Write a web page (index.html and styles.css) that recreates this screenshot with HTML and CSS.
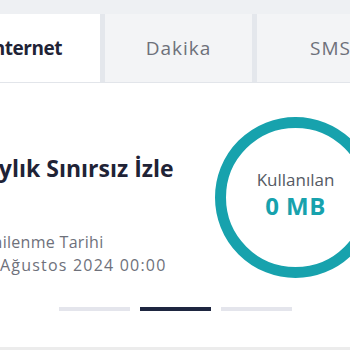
FILE: index.html
```html
<!DOCTYPE html>
<html lang="tr">
<head>
<meta charset="utf-8">
<link rel="stylesheet" href="styles.css">
</head>
<body>
<div class="page">
  <div class="tabbar">
    <div class="tabs">
      <div class="tab active">Internet</div>
      <div class="tab">Dakika</div>
      <div class="tab">SMS</div>
    </div>
  </div>
  <div class="slide">
    <div class="info">
      <div class="title">Aylık Sınırsız İzle</div>
      <div class="meta">
        <div class="meta-label">Yenilenme Tarihi</div>
        <div class="meta-value">15 Ağustos 2024 00:00</div>
      </div>
    </div>
    <div class="ring">
      <div class="ring-label">Kullanılan</div>
      <div class="ring-value">0 MB</div>
    </div>
  </div>
  <div class="dots">
    <span class="dot"></span>
    <span class="dot current"></span>
    <span class="dot"></span>
  </div>
  <div class="footer-strip"></div>
</div>
</body>
</html>
```
FILE: styles.css
```css
html, body {
  margin: 0;
  padding: 0;
  background: #ffffff;
  overflow: hidden;
}
.page {
  width: 350px;
  height: 350px;
  overflow: hidden;
  font-family: "Open Sans", "Noto Sans", sans-serif;
}
.tabbar {
  background: #eef0f3;
  padding-top: 14px;
}
.tabs {
  display: flex;
  margin-left: -47px;
  border-bottom: 1px solid #e2e5ea;
}
.tab {
  flex: none;
  width: 147px;
  height: 68px;
  display: flex;
  align-items: center;
  justify-content: center;
  background: #f3f4f6;
  color: #6d707a;
  font-size: 19px;
  letter-spacing: 1px;
  border-right: 5px solid #e4e7ec;
}
.tab.active {
  width: 143px;
  padding-right: 4px;
  background: #ffffff;
  color: #1f2336;
  font-weight: 700;
  letter-spacing: -0.5px;
}
.slide {
  display: flex;
  align-items: flex-start;
  justify-content: space-between;
  padding-top: 34px;
  margin-left: -26px;
  margin-right: -26px;
}
.info {
  padding-top: 37px;
}
.title {
  padding-left: 9px;
  font-size: 23px;
  line-height: 28px;
  font-weight: 700;
  color: #1f2336;
  white-space: nowrap;
}
.meta {
  margin-top: 49px;
  color: #6e717b;
  font-size: 16px;
  line-height: 23px;
  white-space: nowrap;
}
.meta-label {
  letter-spacing: 0.3px;
}
.meta-value {
  letter-spacing: 1.2px;
}
.ring {
  flex: none;
  box-sizing: border-box;
  width: 161px;
  height: 161px;
  padding-bottom: 6px;
  border: 11px solid #17a2ad;
  border-radius: 50%;
  display: flex;
  flex-direction: column;
  align-items: center;
  justify-content: center;
}
.ring-label {
  font-size: 17px;
  line-height: 22px;
  color: #555a64;
}
.ring-value {
  margin-top: 1px;
  font-size: 24px;
  line-height: 28px;
  letter-spacing: 0.5px;
  font-weight: 700;
  color: #17a2ad;
}
.dots {
  display: flex;
  justify-content: center;
  gap: 10px;
  margin-top: 29px;
}
.dot {
  width: 71px;
  height: 4px;
  background: #e4e5ec;
}
.dot.current {
  background: #1e2640;
}
.footer-strip {
  margin-top: 36px;
  height: 4px;
  background: #ececec;
}
```
